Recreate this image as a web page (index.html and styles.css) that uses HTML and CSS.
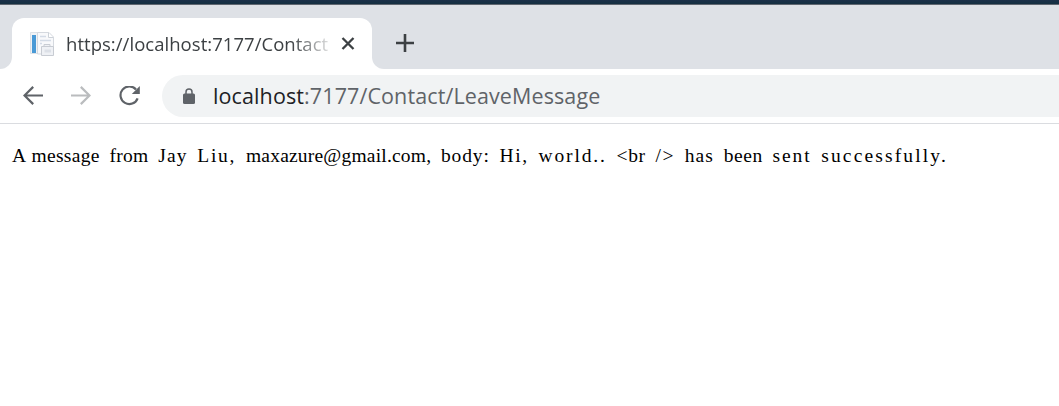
FILE: index.html
```html
<!DOCTYPE html>
<html lang="en">
<head>
<meta charset="utf-8">
<title>https://localhost:7177/Contact/LeaveMessage</title>
<link rel="stylesheet" href="styles.css">
</head>
<body>
<header class="browser">
  <div class="desktop-edge"></div>
  <div class="tab-strip">
    <div class="strip-start"></div>
    <div class="tab">
      <svg class="favicon" width="24" height="26" viewBox="0 0 24 26">
        <path d="M.5 1.500H12v21H.5z" fill="#f1f3f6" stroke="#dde2e7"/>
        <path d="M2 4h4v18H2z" fill="#4a9ad6"/>
        <path d="M7.500 1.500H19L23.500 6v17h-16z" fill="#f8f9fb" stroke="#d5d9df"/>
        <path d="M18.500 2v4.500H23" fill="#fff" stroke="#cdd2d9"/>
        <path d="M10 5.500h6M10 9.500h11M10 12.500h2" stroke="#d3dbe6" stroke-width="1.500"/>
        <path d="M14 15.500v-2h6v2M11.500 15.500h12v9h-12z" fill="#eff1f5" stroke="#c8ccd3"/>
        <path d="M14.500 18.500h6.500v3h-6.500z" fill="#dce0e7"/>
      </svg>
      <span class="tab-title">https://localhost:7177/Contact</span>
      <svg class="close" width="14" height="14" viewBox="0 0 14 14"><path d="M1.500 1l11 11M12.500 1l-11 11" stroke="#3c4043" stroke-width="2.300" fill="none"/></svg>
    </div>
    <div class="strip-rest">
      <svg width="18" height="18" viewBox="0 0 18 18"><path d="M9 0v18M0 9h18" stroke="#3c4043" stroke-width="2.600"/></svg>
    </div>
  </div>
  <div class="toolbar">
    <svg class="back" width="20" height="20" viewBox="0 0 20 20"><path d="M20 9.500H1.500M10.200 .9L1.500 9.500l8.700 8.600" stroke="#5f6368" stroke-width="2.200" fill="none"/></svg>
    <svg class="forward" width="20" height="20" viewBox="0 0 20 20"><path d="M0 9.500h18.500M9.800 .9L18.500 9.500l-8.700 8.600" stroke="#babcbe" stroke-width="2.200" fill="none"/></svg>
    <svg class="reload" width="22" height="20" viewBox="0 0 22 20"><path d="M17 3.500A8.800 8.800 0 1 0 18.600 12.300" stroke="#5f6368" stroke-width="2.200" fill="none"/><path d="M20.800 0v8h-8z" fill="#5f6368"/></svg>
    <div class="address">
      <svg width="12" height="16" viewBox="0 0 12 16"><path d="M3 7V4a3 3 0 0 1 6 0v3" stroke="#5f6368" stroke-width="1.500" fill="none"/><rect y="5.500" width="12" height="10.500" rx="1.500" fill="#5f6368"/></svg>
      <span class="url"><span class="host">localhost</span>:7177/Contact/LeaveMessage</span>
    </div>
  </div>
</header>
<main class="page"><pre class="message">A message from Jay Liu, maxazure@gmail.com, body: Hi, world.. &lt;br /&gt; has been sent successfully.</pre></main>
<script src="script.js"></script>
</body>
</html>
```

FILE: styles.css
```css
body {
  margin: 0;
  background: #fff;
  font-family: "Open Sans", "Noto Sans", sans-serif;
}
.desktop-edge {
  box-sizing: border-box;
  height: 5px;
  background: linear-gradient(#1b3049, #142f41);
  border-bottom: 1px solid #5f6670;
}
.tab-strip {
  display: flex;
  height: 64px;
  background: #fff;
}
.strip-start {
  width: 12px;
  background: #dee1e6;
  border-bottom-right-radius: 12px;
}
.tab {
  box-sizing: border-box;
  display: flex;
  align-items: center;
  width: 360px;
  padding: 13px 17px 0 18px;
  background: linear-gradient(#dee1e6 32px, #fff 32px);
  position: relative;
  z-index: 0;
}
.tab::before {
  content: "";
  position: absolute;
  z-index: -1;
  inset: 13px 0 0;
  background: #fff;
  border-radius: 12px 12px 0 0;
}
.favicon {
  margin-right: 12px;
}
.tab-title {
  width: 263px;
  overflow: hidden;
  white-space: nowrap;
  font-size: 18.5px;
  line-height: 28px;
  color: #3c4043;
  letter-spacing: 0.04px;
  -webkit-mask-image: linear-gradient(90deg, #000 225px, transparent 270px);
  mask-image: linear-gradient(90deg, #000 225px, transparent 270px);
}
.close {
  margin-left: 12px;
}
.strip-rest {
  flex: 1;
  box-sizing: border-box;
  padding: 29px 0 0 24px;
  background: #dee1e6;
  border-bottom-left-radius: 12px;
}
.strip-rest svg {
  display: block;
}
.toolbar {
  box-sizing: border-box;
  display: flex;
  align-items: center;
  height: 55px;
  padding-left: 23px;
  border-bottom: 1px solid #dadce0;
}
.forward {
  margin-left: 28px;
}
.reload {
  margin-left: 28px;
}
.address {
  box-sizing: border-box;
  flex: 1;
  display: flex;
  align-items: center;
  gap: 18px;
  height: 42px;
  margin-left: 21px;
  padding-left: 21px;
  background: #f1f3f4;
  border-radius: 21px 0 0 21px;
}
.url {
  font-size: 21.5px;
  line-height: 30px;
  letter-spacing: 0.11px;
  white-space: nowrap;
  color: #5f6368;
}
.host {
  color: #202124;
}
.page {
  padding: 20px 12px;
}
.message {
  margin: 0;
  font-family: "Liberation Serif", serif;
  font-size: 19.5px;
  line-height: 24px;
  color: #000;
}
.word {
  display: inline-block;
  white-space: pre;
}
```

FILE: script.js
```js
// Sets each word of the message on a fixed character pitch.
const PITCH = 9.75;
const message = document.querySelector(".message");
const words = message.textContent.match(/\S+\s*/g);
message.textContent = "";
for (const text of words) {
  const span = document.createElement("span");
  const word = text.trim();
  span.className = "word";
  span.textContent = word;
  message.append(span);
  const width = word.length * PITCH;
  const natural = span.getBoundingClientRect().width;
  span.style.letterSpacing = (width - natural) / word.length + "px";
  span.style.width = text.length * PITCH + "px";
  span.textContent = text;
}
```
